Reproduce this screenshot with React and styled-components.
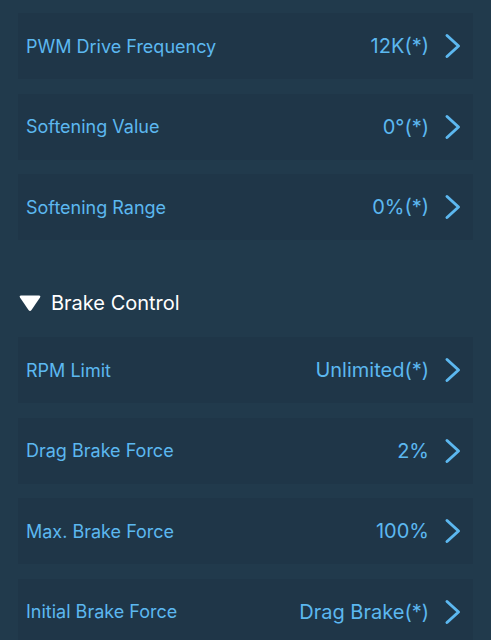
import React from 'react';
import styled, { createGlobalStyle } from 'styled-components';

const GlobalStyle = createGlobalStyle`
	html, body {
		margin: 0;
		padding: 0;
		background: #213a4c;
		overflow: hidden;
	}
	body {
		font-family: Inter, "Open Sans", sans-serif;
		-webkit-font-smoothing: antialiased;
	}
`;

const Page = styled.div`
	display: flex;
	flex-direction: column;
	padding: 13px 18px 0;
	& > * {
		flex-shrink: 0;
	}
`;

const Group = styled.div`
	display: flex;
	flex-direction: column;
	gap: 14.5px;
`;

const Row = styled.div`
	display: flex;
	align-items: center;
	height: 66px;
	padding: 0 11px 0 8px;
	background: #1f3648;
	color: #5cb8f0;
	font-size: 18px;
`;

const Label = styled.span`
	flex: 1;
`;

const Value = styled.span`
	margin-right: 15px;
	font-size: 20px;
`;

const SectionHeader = styled.div`
	display: flex;
	align-items: center;
	gap: 9px;
	height: 32px;
	margin: 47px 0 18px;
	color: #ffffff;
	font-size: 20px;
`;

const Chevron = () => (
	<svg width="18" height="26" viewBox="0 0 18 26">
		<path d="M3 2.5 L14.5 13 L3 23.5" fill="none" stroke="#5cb8f0" strokeWidth="3" strokeLinecap="round" strokeLinejoin="round" />
	</svg>
);

const Triangle = () => (
	<svg width="24" height="18" viewBox="0 0 24 18">
		<path d="M3 1.5 H21 Q23 1.5 22 3.5 L13.5 16 Q12 17.8 10.5 16 L2 3.5 Q1 1.5 3 1.5 Z" fill="#ffffff" />
	</svg>
);

const SettingRow = ({ label, value }) => (
	<Row>
		<Label>{label}</Label>
		<Value>{value}</Value>
		<Chevron />
	</Row>
);

const motorRows = [
	['PWM Drive Frequency', '12K(*)'],
	['Softening Value', '0°(*)'],
	['Softening Range', '0%(*)'],
];

const brakeRows = [
	['RPM Limit', 'Unlimited(*)'],
	['Drag Brake Force', '2%'],
	['Max. Brake Force', '100%'],
	['Initial Brake Force', 'Drag Brake(*)'],
];

export default function App() {
	return (
		<>
			<GlobalStyle />
			<Page>
				<Group>
					{motorRows.map(([label, value]) => (
						<SettingRow key={label} label={label} value={value} />
					))}
				</Group>
				<SectionHeader>
					<Triangle />
					Brake Control
				</SectionHeader>
				<Group>
					{brakeRows.map(([label, value]) => (
						<SettingRow key={label} label={label} value={value} />
					))}
				</Group>
			</Page>
		</>
	);
}
